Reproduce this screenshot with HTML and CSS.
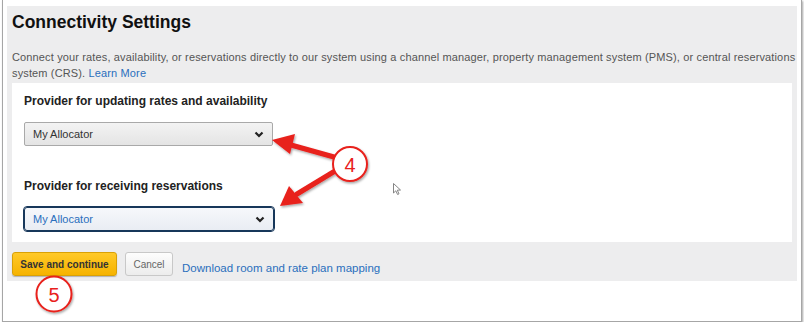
FILE: index.html
```html
<!DOCTYPE html>
<html lang="en">
<head>
    <meta charset="UTF-8">
    <meta name="viewport" content="width=device-width, initial-scale=1.0">
    <title>Connectivity Settings</title>
    <link rel="stylesheet" href="styles.css">
</head>
<body>
    <div class="frame">
        <div class="panel">
            <div class="header">
                <h1>Connectivity Settings</h1>
                <p class="intro">Connect your rates, availability, or reservations directly to our system using a channel manager, property management system (PMS), or central reservations system (CRS). <a href="#">Learn More</a></p>
            </div>

            <div class="card">
                <div class="field">
                    <label>Provider for updating rates and availability</label>
                    <div class="select">
                        <span>My Allocator</span>
                        <svg class="chevron" width="10" height="7" viewBox="0 0 10 7"><path d="M1.5 1.5 L5 5 L8.5 1.5" fill="none" stroke="#222" stroke-width="2.2"/></svg>
                    </div>
                </div>
                <div class="field">
                    <label>Provider for receiving reservations</label>
                    <div class="select focused">
                        <span>My Allocator</span>
                        <svg class="chevron" width="10" height="7" viewBox="0 0 10 7"><path d="M1.5 1.5 L5 5 L8.5 1.5" fill="none" stroke="#222" stroke-width="2.2"/></svg>
                    </div>
                </div>
            </div>

            <div class="actions">
                <button class="btn-primary">Save and continue</button>
                <button class="btn-cancel">Cancel</button>
                <a class="mapping" href="#">Download room and rate plan mapping</a>
            </div>
        </div>

        <!-- annotation callouts -->
        <svg class="callouts" width="804" height="325" viewBox="0 0 804 325">
            <defs>
                <filter id="shade" x="-30%" y="-30%" width="160%" height="160%">
                    <feDropShadow dx="1" dy="1.5" stdDeviation="1.2" flood-color="#000" flood-opacity="0.35"/>
                </filter>
            </defs>
            <g filter="url(#shade)">
                <line x1="334" y1="157" x2="291" y2="145" stroke="#e8201c" stroke-width="5" stroke-linecap="round"/>
                <polygon points="272,140 295,134 290,154" fill="#e8201c"/>
                <line x1="335" y1="171" x2="297" y2="194" stroke="#e8201c" stroke-width="5" stroke-linecap="round"/>
                <polygon points="280,206 289,186 303,203" fill="#e8201c"/>
                <circle cx="350" cy="164" r="17" fill="#fff" stroke="#e8201c" stroke-width="2"/>
                <circle cx="54" cy="294" r="17.5" fill="#fff" stroke="#e8201c" stroke-width="2"/>
            </g>
            <text x="350" y="171.5" text-anchor="middle" class="num">4</text>
            <text x="54" y="301.5" text-anchor="middle" class="num">5</text>
            <path d="M393.5 183.5 L393.5 193 L395.8 190.8 L397.6 194.5 L399 193.8 L397.3 190.2 L400.5 190 Z" fill="#fff" stroke="#777" stroke-width="0.9"/>
        </svg>
    </div>
</body>
</html>
```

FILE: styles.css
```css
body {
    margin: 0;
    background-color: #fff;
    font-family: 'Liberation Sans', Arial, sans-serif;
    color: #222;
}
.frame {
    position: relative;
    box-sizing: border-box;
    width: 800px;
    height: 322px;
    margin-left: 2px;
    padding: 6px 4px 0 4px;
    border: 1px solid #a6a6a6;
    border-top: none;
    box-shadow: 1px 1px 2px rgba(0, 0, 0, 0.35);
}
.panel {
    height: 275px;
    background-color: #ededee;
    padding: 0 5px;
}
.header {
    padding-top: 6px;
}
h1 {
    margin: 0;
    font-size: 17.5px;
    line-height: 20px;
    color: #111;
}
.intro {
    margin: 17px -8px 2px 0;
    font-size: 11px;
    letter-spacing: 0.14px;
    line-height: 16px;
    color: #555;
}
a {
    color: #2a6fbd;
    text-decoration: none;
}
.card {
    background-color: #fff;
    padding: 10px 12px 11px;
}
.field label {
    display: block;
    font-size: 12px;
    line-height: 16px;
    font-weight: bold;
    color: #222;
}
.field + .field {
    margin-top: 32px;
}
.select {
    box-sizing: border-box;
    width: 249px;
    height: 24px;
    margin-top: 13px;
    display: flex;
    align-items: center;
    justify-content: space-between;
    padding: 0 8px;
    border: 1px solid #a9a9a9;
    border-radius: 2px;
    background: linear-gradient(#f3f3f3, #e4e4e4);
    font-size: 11px;
    color: #333;
}
.select.focused {
    width: 250px;
    border-color: #17375a;
    outline: 1px solid #17375a;
    border-radius: 3px;
    background: linear-gradient(#f6f8fb, #e9edf3);
    color: #2a6fbd;
}
.actions {
    display: flex;
    align-items: flex-end;
    padding-top: 10px;
}
.actions button {
    font-family: 'Liberation Sans', Arial, sans-serif;
    height: 24px;
    margin: 0;
    border-radius: 3px;
    cursor: pointer;
}
.btn-primary {
    width: 105px;
    height: 23px;
    font-size: 10px;
    font-weight: bold;
    color: #333;
    background: linear-gradient(#ffc928, #f6b300);
    border: 1px solid #d9a106;
    box-shadow: 0 1px 1px rgba(0, 0, 0, 0.25);
}
.btn-cancel {
    width: 48px;
    margin-left: 8px !important;
    font-size: 10px;
    color: #666;
    background: linear-gradient(#fdfdfd, #ececec);
    border: 1px solid #c8c8c8;
}
.mapping {
    margin-left: 9px;
    font-size: 11.5px;
    line-height: 16px;
}
.callouts {
    position: absolute;
    left: -3px;
    top: 0;
    pointer-events: none;
}
.num {
    font-family: 'Liberation Sans', Arial, sans-serif;
    font-size: 20px;
    fill: #e8201c;
}
```
